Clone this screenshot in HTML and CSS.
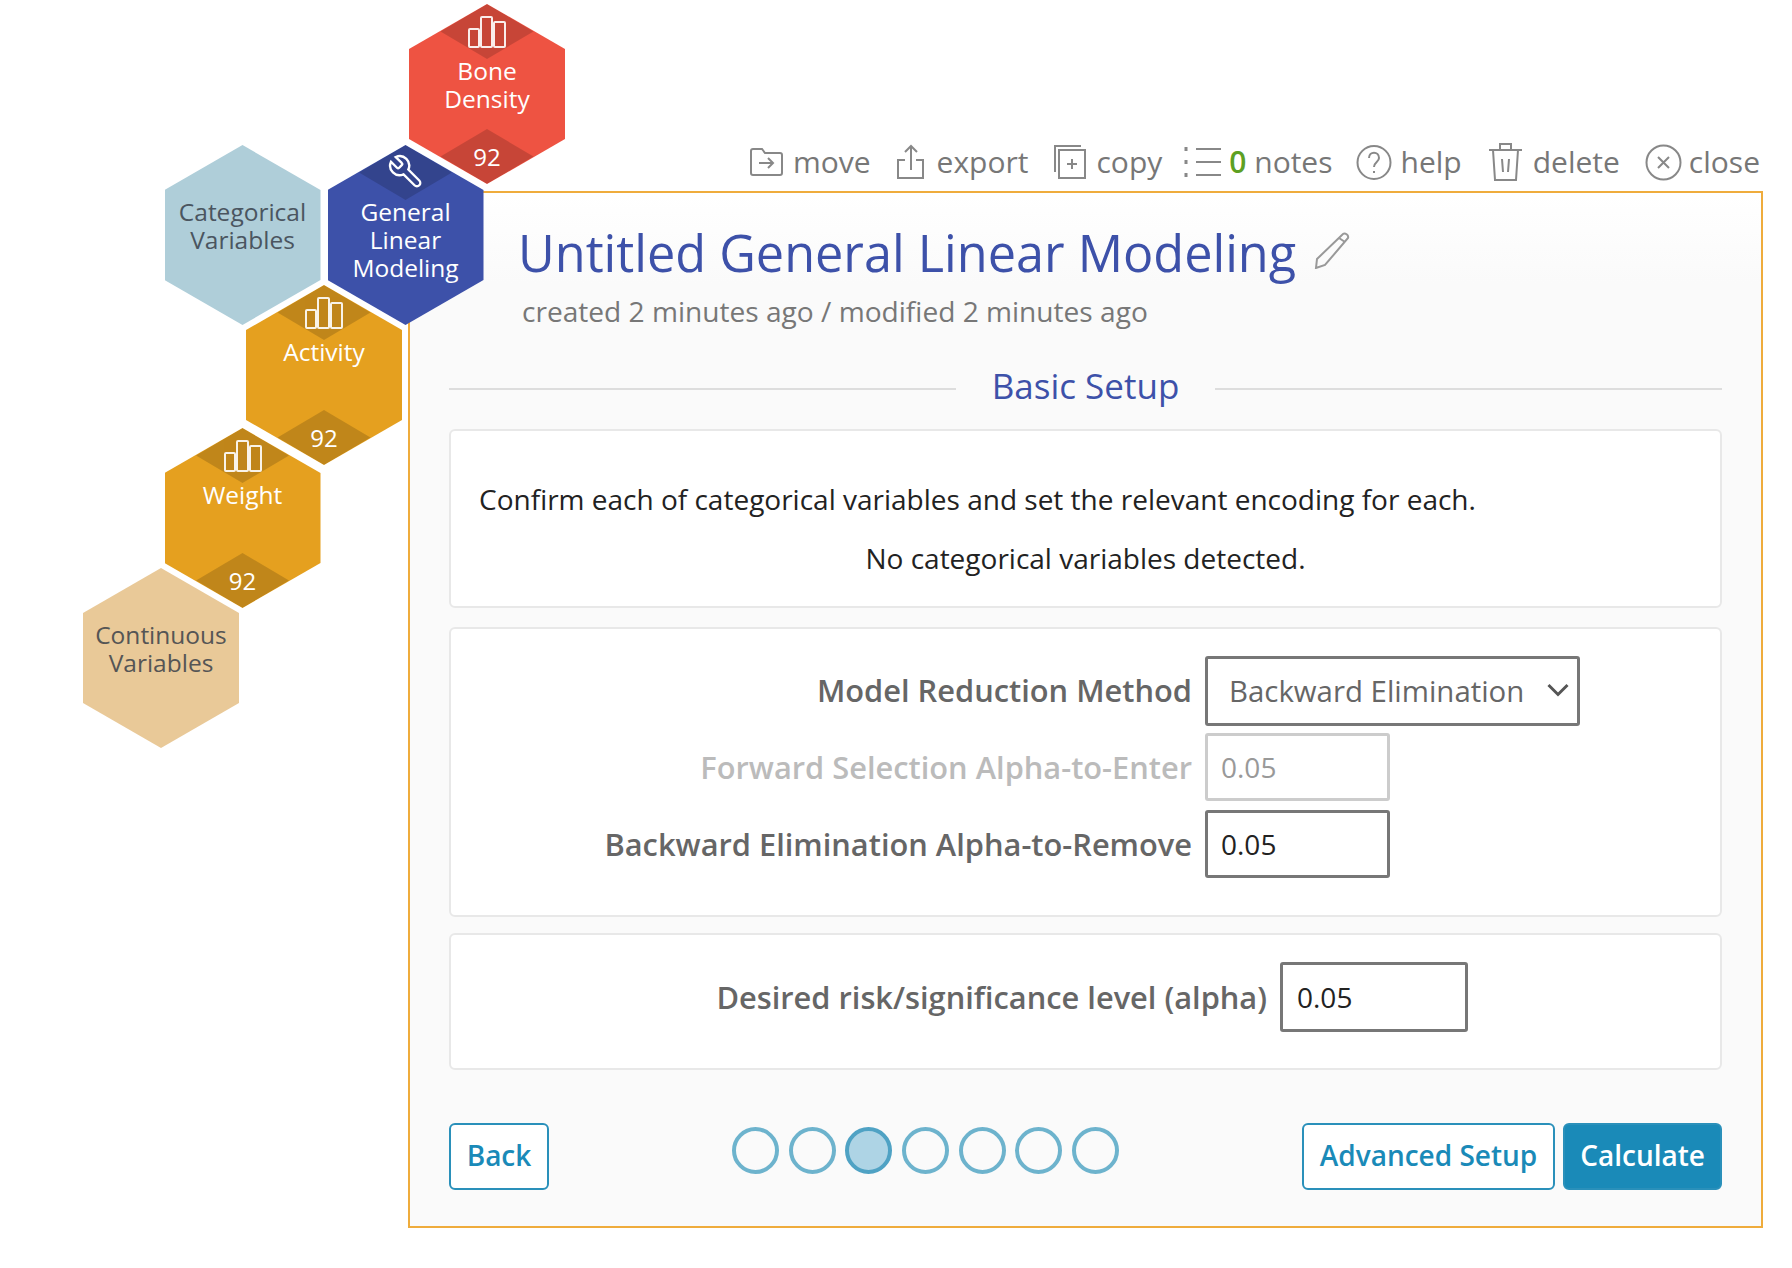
FILE: index.html
```html
<!DOCTYPE html>
<html lang="en">
<head>
  <meta charset="UTF-8" />
  <title>Untitled General Linear Modeling</title>
  <link rel="stylesheet" href="styles.css">
</head>
<body>
  <!-- hex map: each cell sits at its own place on the board -->
  <div class="hex-map">
    <div class="hex hex-bone red">
      <div class="cap"></div>
      <div class="foot"></div>
      <svg class="bars" viewBox="0 0 38 32"><rect x="1" y="13" width="10" height="18" rx="1"/><rect x="13" y="1" width="11" height="30" rx="1"/><rect x="26" y="6" width="11" height="25" rx="1"/></svg>
      <div class="hex-label">Bone<br>Density</div>
      <div class="hex-num">92</div>
    </div>
    <div class="hex hex-cat pale-blue">
      <div class="hex-label">Categorical<br>Variables</div>
    </div>
    <div class="hex hex-glm blue">
      <div class="cap"></div>
      <svg class="wrench" viewBox="0 0 24 24"><path d="M14.7 6.3a1 1 0 0 0 0 1.4l1.6 1.6a1 1 0 0 0 1.4 0l3.77-3.77a6 6 0 0 1-7.94 7.94l-6.91 6.91a2.12 2.12 0 0 1-3-3l6.91-6.91a6 6 0 0 1 7.94-7.94l-3.76 3.76z"/></svg>
      <div class="hex-label">General<br>Linear<br>Modeling</div>
    </div>
    <div class="hex hex-activity orange">
      <div class="cap"></div>
      <div class="foot"></div>
      <svg class="bars" viewBox="0 0 38 32"><rect x="1" y="13" width="10" height="18" rx="1"/><rect x="13" y="1" width="11" height="30" rx="1"/><rect x="26" y="6" width="11" height="25" rx="1"/></svg>
      <div class="hex-label">Activity</div>
      <div class="hex-num">92</div>
    </div>
    <div class="hex hex-weight orange">
      <div class="cap"></div>
      <div class="foot"></div>
      <svg class="bars" viewBox="0 0 38 32"><rect x="1" y="13" width="10" height="18" rx="1"/><rect x="13" y="1" width="11" height="30" rx="1"/><rect x="26" y="6" width="11" height="25" rx="1"/></svg>
      <div class="hex-label">Weight</div>
      <div class="hex-num">92</div>
    </div>
    <div class="hex hex-cont tan">
      <div class="hex-label">Continuous<br>Variables</div>
    </div>
  </div>

  <div class="main">
    <div class="toolbar">
      <a class="tool">
        <svg class="ico" width="35" height="32" viewBox="0 0 35 32"><path d="M2 5a2 2 0 0 1 2-2h9l3 4h15a2 2 0 0 1 2 2v18a2 2 0 0 1-2 2H4a2 2 0 0 1-2-2z"/><path d="M10 17h14M19 12l5 5-5 5"/></svg>
        <span>move</span>
      </a>
      <a class="tool tool-export">
        <svg class="ico" width="29" height="36" viewBox="0 0 29 36"><path d="M15 26V2M9 8l6-6 6 6"/><path d="M9 16H2v18h25V16h-7"/></svg>
        <span>export</span>
      </a>
      <a class="tool tool-copy">
        <svg class="ico" width="34" height="36" viewBox="0 0 34 36"><path d="M2 28V2h26"/><path d="M6 6h26v28H6z"/><path d="M19 15v10M14 20h10"/></svg>
        <span>copy</span>
      </a>
      <a class="tool tool-notes">
        <svg class="ico" width="38" height="35" viewBox="0 0 38 35"><path d="M12 4h25M12 17h25M12 30h25"/><path class="dots" d="M2 2v4M2 15v4M2 28v4"/></svg>
        <span><b class="note-count">0</b> notes</span>
      </a>
      <a class="tool">
        <svg class="ico" width="36" height="37" viewBox="0 0 36 37"><circle cx="18" cy="18.500" r="16.500"/><path d="M13 14c0-7 10-7 10 0 0 4-5 4-5 9"/><path d="M18 27v2"/></svg>
        <span>help</span>
      </a>
      <a class="tool">
        <svg class="ico" width="37" height="41" viewBox="0 0 37 41"><path d="M2 9h33M13 9V3h11v6"/><path d="M6 9l2 30h21l2-30"/><path d="M15 18l1 13M22 18l-1 13"/></svg>
        <span>delete</span>
      </a>
      <a class="tool tool-close">
        <svg class="ico" width="37" height="37" viewBox="0 0 37 37"><circle cx="18.500" cy="18.500" r="17"/><path d="M13 13l11 11M24 13L13 24"/></svg>
        <span>close</span>
      </a>
    </div>

    <div class="panel">
      <div class="title-row">
        <h1>Untitled General Linear Modeling</h1>
        <svg class="pencil" width="36" height="37" viewBox="0 0 36 37"><path d="M29 2c2-1.500 6 1 5 4L11 33l-9 3 1-9z"/><path d="M25 6l6 4"/></svg>
      </div>
      <div class="dates">created 2 minutes ago / modified 2 minutes ago</div>

      <div class="step-head">
        <span class="rule"></span>
        <h2>Basic Setup</h2>
        <span class="rule"></span>
      </div>

      <div class="card card-text">
        <p>Confirm each of categorical variables and set the relevant encoding for each.</p>
        <p class="center">No categorical variables detected.</p>
      </div>

      <div class="card card-form">
        <div class="row">
          <label>Model Reduction Method</label>
          <div class="select-wrap">
            <select class="field select">
              <option>Backward Elimination</option>
            </select>
            <svg class="chevron" width="22" height="14" viewBox="0 0 22 14"><path d="M1.500 2l9.500 9.500L20.500 2"/></svg>
          </div>
        </div>
        <div class="row row-off">
          <label>Forward Selection Alpha-to-Enter</label>
          <input class="field num" value="0.05" disabled>
        </div>
        <div class="row">
          <label>Backward Elimination Alpha-to-Remove</label>
          <input class="field num" value="0.05">
        </div>
      </div>

      <div class="card card-alpha">
        <div class="row">
          <label>Desired risk/significance level (alpha)</label>
          <input class="field num" value="0.05">
        </div>
      </div>

      <div class="nav">
        <button class="btn btn-back">Back</button>
        <div class="dots-row">
          <span class="dot"></span>
          <span class="dot"></span>
          <span class="dot active"></span>
          <span class="dot"></span>
          <span class="dot"></span>
          <span class="dot"></span>
          <span class="dot"></span>
        </div>
        <div class="nav-right">
          <button class="btn">Advanced Setup</button>
          <button class="btn btn-main">Calculate</button>
        </div>
      </div>
    </div>
  </div>
</body>
</html>
```

FILE: styles.css
```css
* {
  box-sizing: border-box;
}
body {
  margin: 0;
  background: #fff;
  color: #666;
  font-family: "Open Sans", "Liberation Sans", sans-serif;
}

/* hex map */
.hex-map {
  position: absolute;
  left: 0;
  top: 0;
  z-index: 2;
}
.hex {
  position: absolute;
  width: 156px;
  height: 180px;
  clip-path: polygon(50% 0, 100% 25%, 100% 75%, 50% 100%, 0 75%, 0 25%);
  text-align: center;
  color: #fff;
}
.hex-bone { left: 409px; top: 4px; }
.hex-cat { left: 164.500px; top: 145px; }
.hex-glm { left: 327.500px; top: 145px; }
.hex-activity { left: 246px; top: 285px; }
.hex-weight { left: 164.500px; top: 428px; }
.hex-cont { left: 83px; top: 568px; }
.red { background: #ee5342; }
.blue { background: #3d51a9; }
.orange { background: #e5a01f; }
.pale-blue { background: #afced9; color: #4a5560; }
.tan { background: #e9c998; color: #555; }
.cap, .foot {
  position: absolute;
  left: 31.500px;
  width: 93px;
  height: 55px;
  clip-path: polygon(50% 0, 100% 50%, 50% 100%, 0 50%);
  background: rgba(0, 0, 0, 0.16);
}
.cap { top: 0; }
.foot { bottom: 0; }
.hex-label {
  position: relative;
  padding-top: 53px;
  font-size: 24.500px;
  line-height: 28px;
}
.hex-num {
  position: absolute;
  left: 0;
  right: 0;
  bottom: 11px;
  font-size: 24px;
  line-height: 32px;
}
.bars {
  position: absolute;
  left: 59px;
  top: 12px;
  width: 38px;
  height: 32px;
  fill: none;
  stroke: #fff;
  stroke-width: 2;
  opacity: 0.9;
}
.wrench {
  position: absolute;
  left: 59px;
  top: 8px;
  width: 38px;
  height: 38px;
  fill: none;
  stroke: #fff;
  stroke-width: 1.500;
  transform: scaleX(-1);
}

/* top tools */
.main {
  margin-left: 408px;
  width: 1355px;
}
.toolbar {
  height: 191px;
  display: flex;
  justify-content: flex-end;
  align-items: flex-end;
  gap: 25px;
  padding-right: 3px;
  padding-bottom: 9px;
  font-size: 30px;
  line-height: 40px;
  color: #777;
}
.tool {
  display: flex;
  align-items: center;
  gap: 9px;
}
.tool-export {
  gap: 12px;
}
.tool-copy {
  margin-right: -3px;
}
.tool-notes {
  gap: 7px;
  margin-right: -2px;
}
.tool-close {
  gap: 7px;
}
.ico {
  fill: none;
  stroke: #888;
  stroke-width: 2;
}
.ico .dots {
  stroke-width: 3;
}
.note-count {
  color: #5da022;
  font-weight: 600;
}

/* panel */
.panel {
  height: 1037px;
  padding: 0 39px;
  border: 2px solid #efac3c;
  background: linear-gradient(#fff, #fafafa 90px);
}
.title-row {
  display: flex;
  align-items: center;
  gap: 18px;
  padding-top: 26px;
  padding-left: 69px;
}
h1 {
  margin: 0;
  font-size: 50.400px;
  line-height: 68px;
  font-weight: 400;
  color: #3d51a9;
}
.pencil {
  margin-top: -5px;
  fill: none;
  stroke: #999;
  stroke-width: 2;
}
.dates {
  margin-top: 4px;
  padding-left: 73px;
  font-size: 28.100px;
  line-height: 40px;
  color: #777;
}
.step-head {
  display: flex;
  align-items: center;
  gap: 36px;
  margin-top: 30px;
  height: 48px;
}
.rule {
  flex: 1;
  height: 2px;
  margin-top: 8px;
  background: #ddd;
}
h2 {
  margin: 0;
  font-size: 35px;
  font-weight: 400;
  color: #3d51a9;
}

.card {
  margin-top: 20px;
  background: #fff;
  border: 2px solid #e8e8e8;
  border-radius: 6px;
}
.card-text {
  height: 179px;
  padding: 50px 28px 0;
  font-size: 28px;
  line-height: 36px;
  color: #222;
}
.card-text p {
  margin: 0 0 23px;
}
.center {
  text-align: center;
}
.card-form {
  height: 290px;
  margin-top: 19px;
  padding-top: 27px;
}
.card-alpha {
  height: 137px;
  padding-top: 28px;
  margin-top: 16px;
}
.row {
  display: flex;
  align-items: center;
  height: 68px;
  margin-bottom: 9px;
}
.row label {
  font-size: 30.800px;
  font-weight: 600;
  color: #666;
  text-align: right;
  width: 741px;
  margin-right: 13px;
}
.card-alpha .row label {
  width: 816px;
}
.row-off label {
  color: #bbb;
}
.field {
  height: 68px;
  border: 3px solid #777;
  border-radius: 3px;
  background: #fff;
  font-family: inherit;
  font-size: 28px;
  color: #222;
  padding: 0 13px;
}
.field:disabled {
  border-color: #ccc;
  color: #999;
}
.num {
  width: 185px;
}
.card-alpha .num {
  width: 188px;
  height: 70px;
  padding: 0 14px;
}
.select-wrap {
  position: relative;
  margin-top: 2px;
}
.select {
  display: block;
  width: 375px;
  height: 70px;
  padding-left: 21px;
  appearance: none;
  font-size: 29.400px;
  color: #666;
}
.chevron {
  position: absolute;
  right: 11px;
  top: 27px;
  fill: none;
  stroke: #555;
  stroke-width: 3;
}

/* wizard nav */
.nav {
  display: flex;
  justify-content: space-between;
  align-items: center;
  margin-top: 53px;
}
.btn {
  height: 67px;
  padding: 0 16px 3px;
  border: 2px solid #2a90ba;
  border-radius: 6px;
  background: #fff;
  color: #1a8ab8;
  font-family: inherit;
  font-size: 28px;
  font-weight: 600;
}
.btn-back {
  width: 100px;
  padding: 0 0 3px;
}
.btn-main {
  padding: 0 15px 3px;
  background: #1a8ab8;
  color: #fff;
}
.nav-right {
  display: flex;
  gap: 8px;
}
.dots-row {
  display: flex;
  gap: 9.700px;
  margin-top: -12px;
}
.dot {
  width: 47px;
  height: 47px;
  border: 4px solid #6db3cd;
  border-radius: 50%;
}
.dot.active {
  background: #aed4e5;
  border-color: #4fa2c4;
}
```
